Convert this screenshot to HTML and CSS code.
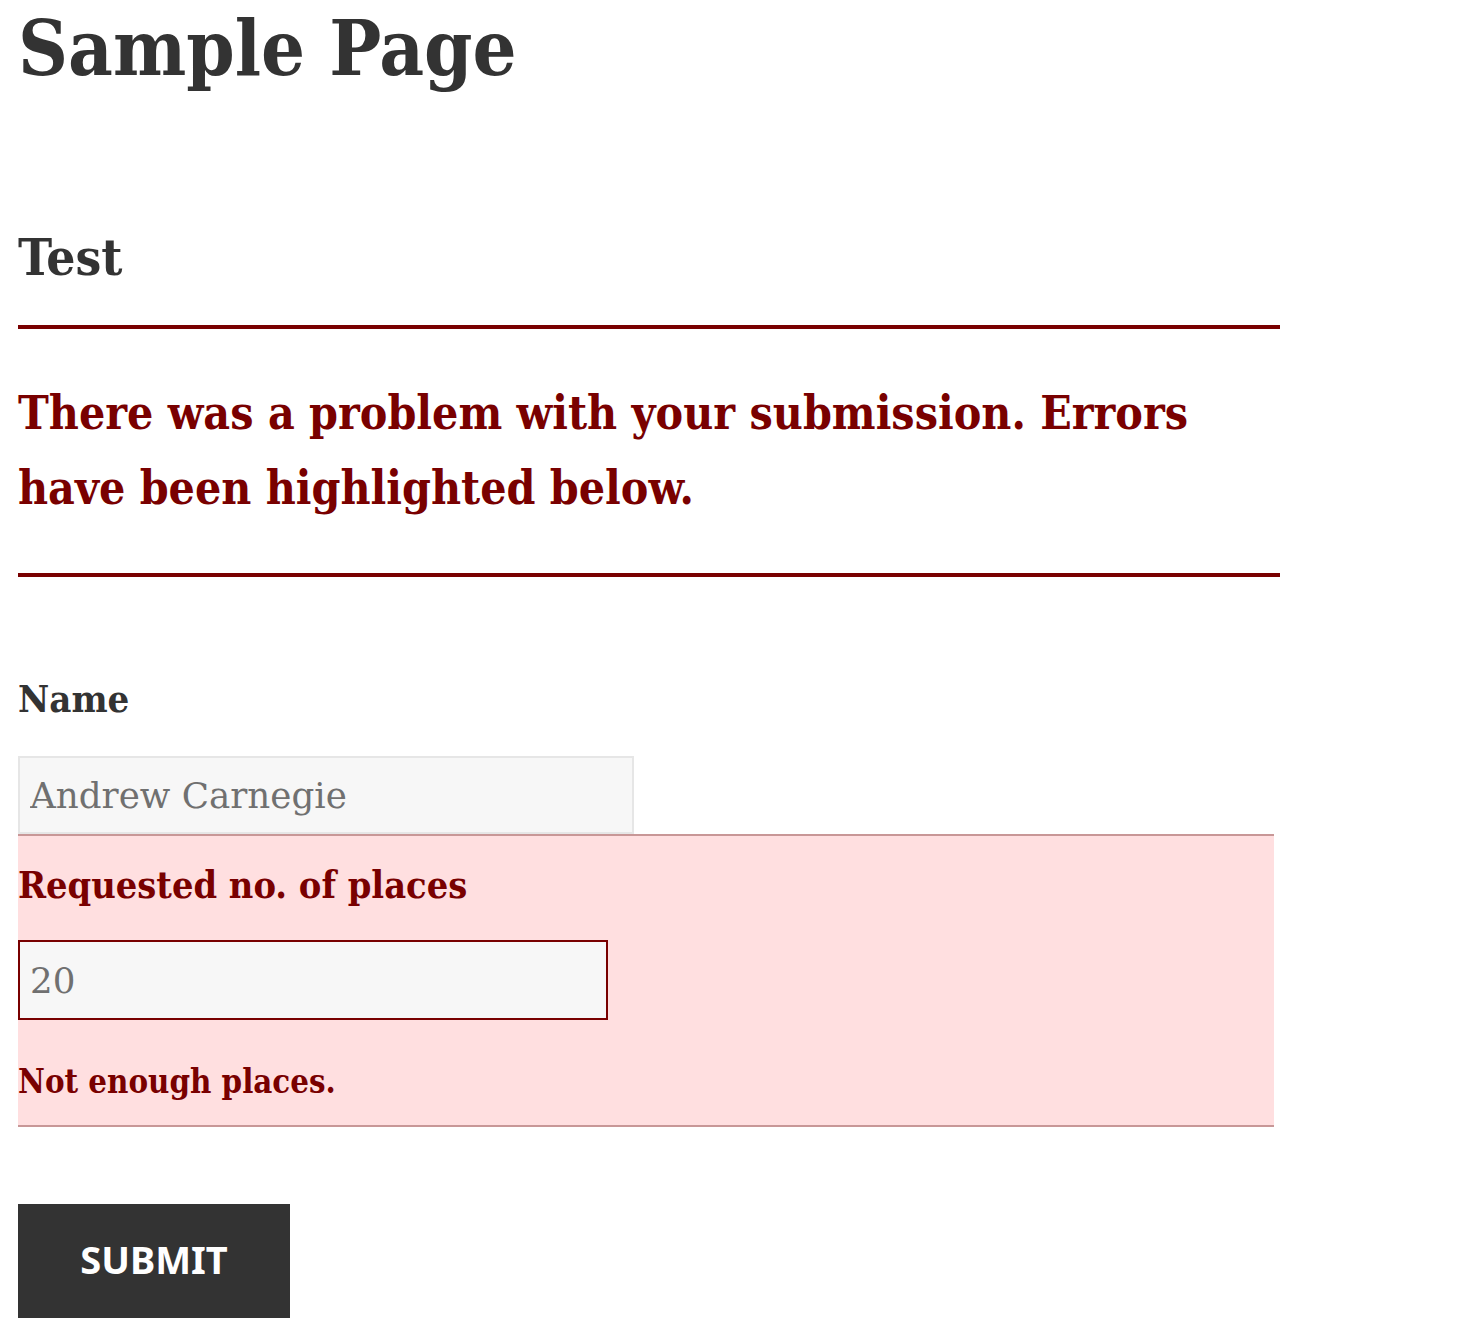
FILE: index.html
```html
<!DOCTYPE html>
<html lang="en">
<head>
<meta charset="utf-8">
<title>Sample Page</title>
<link rel="stylesheet" href="styles.css">
</head>
<body>
<main class="page">
  <h1 class="entry-title">Sample Page</h1>
  <h2 class="form-title">Test</h2>
  <div class="validation-error">There was a problem with your submission. Errors have been highlighted below.</div>
  <form class="form">
    <div class="field">
      <label class="field-label" for="name">Name</label>
      <input class="text-input name-input" id="name" type="text" value="Andrew Carnegie">
    </div>
    <div class="field field-error">
      <label class="field-label error-label" for="places">Requested no. of places</label>
      <input class="text-input places-input" id="places" type="text" value="20">
      <div class="validation-message">Not enough places.</div>
    </div>
    <div class="form-footer">
      <button class="submit-button" type="button">Submit</button>
    </div>
  </form>
</main>
</body>
</html>
```

FILE: styles.css
```css
html, body {
  margin: 0;
  padding: 0;
  background: #ffffff;
}

body {
  font-family: "DejaVu Serif Condensed", "DejaVu Serif", serif;
  font-stretch: condensed;
  color: #333333;
}

.page {
  width: 1262px;
  padding: 0 0 0 18px;
}

.entry-title {
  margin: 0;
  font-size: 77px;
  line-height: 96px;
  font-weight: 700;
  color: #333333;
}

.form-title {
  margin: 131px 0 0;
  font-size: 51px;
  line-height: 60px;
  font-weight: 700;
  color: #333333;
}

.validation-error {
  margin-top: 38px;
  border-top: 4px solid #790000;
  border-bottom: 4px solid #790000;
  padding: 47px 0;
  font-size: 46px;
  line-height: 75px;
  font-weight: 700;
  color: #790000;
}

.form {
  margin: 0;
}

.field-label {
  display: block;
  font-weight: 700;
}

.field:first-child .field-label {
  margin-top: 99px;
  font-size: 38px;
  line-height: 46px;
  margin-bottom: 34px;
  color: #333333;
}

.text-input {
  display: block;
  box-sizing: border-box;
  margin: 0;
  font-family: "DejaVu Serif", serif;
  font-stretch: normal;
  font-size: 35.7px;
  color: #707070;
  background: #f7f7f7;
  padding: 0 10px;
  outline: none;
}

.name-input {
  width: 616px;
  height: 78px;
  border: 2px solid #e6e6e6;
}

.field-error {
  width: 1256px;
  background: #ffdfe0;
  border-top: 2px solid #c89797;
  border-bottom: 2px solid #c89797;
  padding: 27px 0 23px;
}

.error-label {
  font-size: 37.6px;
  line-height: 44px;
  color: #790000;
  margin-bottom: 33px;
}

.places-input {
  width: 590px;
  height: 80px;
  border: 2px solid #790000;
}

.validation-message {
  margin-top: 42px;
  font-size: 32.7px;
  line-height: 40px;
  font-weight: 700;
  color: #790000;
}

.form-footer {
  margin-top: 77px;
}

.submit-button {
  display: block;
  width: 272px;
  height: 114px;
  margin: 0;
  border: 0;
  border-radius: 0;
  background: #333333;
  color: #ffffff;
  font-family: "Noto Sans", sans-serif;
  font-weight: 700;
  font-size: 38px;
  line-height: 1;
  text-transform: uppercase;
  padding: 0 0 4px;
  cursor: pointer;
}
```
